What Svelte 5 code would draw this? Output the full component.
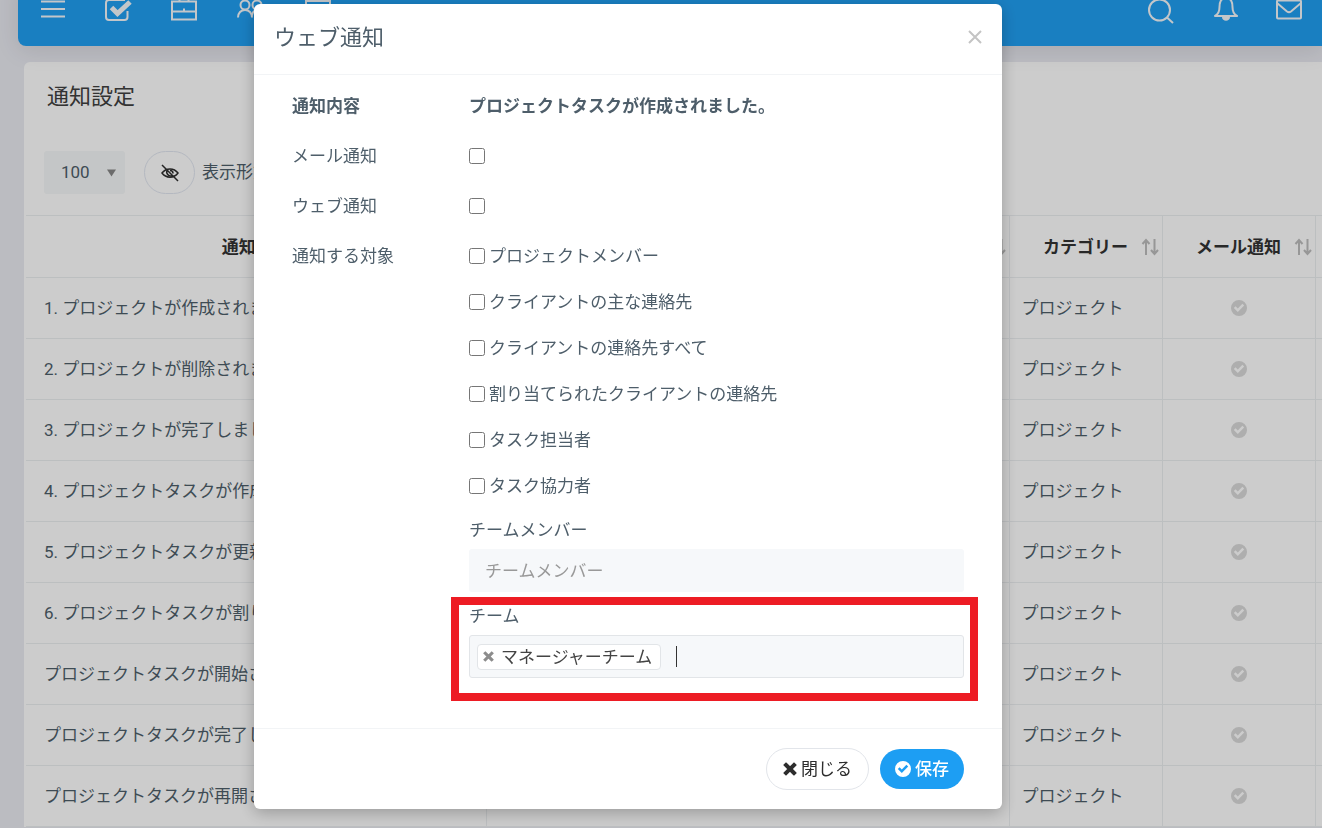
<script lang="ts">
  const rows = [
    '1. プロジェクトが作成されました。',
    '2. プロジェクトが削除されました。',
    '3. プロジェクトが完了しました。',
    '4. プロジェクトタスクが作成されました。',
    '5. プロジェクトタスクが更新されました。',
    '6. プロジェクトタスクが割り当てられました。',
    'プロジェクトタスクが開始されました。',
    'プロジェクトタスクが完了しました。',
    'プロジェクトタスクが再開されました。',
  ]

  const columns = ['通知内容', '通知する対象', 'カテゴリー', 'メール通知']

  let targets = $state([
    { id: 'project-members', label: 'プロジェクトメンバー', checked: false },
    { id: 'primary-contact', label: 'クライアントの主な連絡先', checked: false },
    { id: 'all-contacts', label: 'クライアントの連絡先すべて', checked: false },
    { id: 'assigned-contacts', label: '割り当てられたクライアントの連絡先', checked: false },
    { id: 'assignee', label: 'タスク担当者', checked: false },
    { id: 'collaborators', label: 'タスク協力者', checked: false },
  ])

  let teams = $state(['マネージャーチーム'])
  let mail = $state(false)
  let web = $state(false)

  function removeTeam(name: string) {
    teams = teams.filter((t) => t !== name)
  }
</script>

{#snippet cross()}
  <svg class="cross" viewBox="0 0 14 14" aria-hidden="true">
    <path d="M3 3l8 8M11 3l-8 8" stroke="currentColor" stroke-width="4" stroke-linecap="square" />
  </svg>
{/snippet}

{#snippet checkCircle()}
  <svg class="check-circle" viewBox="0 0 16 16" aria-hidden="true">
    <path
      fill="currentColor"
      fill-rule="evenodd"
      d="M8 0a8 8 0 1 0 0 16A8 8 0 0 0 8 0zM6.8 12L2.8 8l1.8-1.8 2.2 2.2 4.6-4.6 1.8 1.8z"
    />
  </svg>
{/snippet}

<header class="topbar">
  <nav>
    <a href="#menu" aria-label="メニュー">
      <svg viewBox="0 0 28 28"><path d="M2 7.5h24M2 15h24M2 22.5h24" /></svg>
    </a>
    <a href="#tasks" aria-label="タスク">
      <svg viewBox="0 0 28 28">
        <path d="M20 6H4a3 3 0 0 0-3 3v14a3 3 0 0 0 3 3h15.5a3 3 0 0 0 3-3v-6" />
        <path d="M6.500 13.500l6 6L25 8" stroke-width="5" />
      </svg>
    </a>
    <a href="#projects" aria-label="プロジェクト">
      <svg viewBox="0 0 28 28">
        <path d="M1 7.500h24V25.500H1zM1 17.500h24M8.500 7V3h9v4M13 14.500v2" />
      </svg>
    </a>
    <a href="#members" aria-label="メンバー">
      <svg viewBox="0 0 28 28">
        <circle cx="8" cy="11" r="4.500" />
        <path d="M1 23.500c0-4.500 3-7.500 7-7.500s7 3 7 7.500" />
        <circle cx="20" cy="11" r="4.500" />
        <path d="M15 21.500c.5-3.500 2.500-5.500 5.500-5.500 4 0 6.500 3 6.500 7.500" />
      </svg>
    </a>
    <a href="#board" aria-label="ボード">
      <svg viewBox="0 0 28 28"><path d="M3 7h24v18H3zM8 12.500h14" /></svg>
    </a>
  </nav>
  <nav class="right">
    <a href="#search" aria-label="検索">
      <svg viewBox="0 0 28 28"><circle cx="12.500" cy="16" r="10.500" /><path d="M20 23.500l6 5.500" /></svg>
    </a>
    <a href="#alerts" aria-label="お知らせ">
      <svg viewBox="0 0 28 28">
        <path
          d="M4 22c3-1.500 4.500-4 4.500-9C8.500 7 11 4 15 4s6.500 3 6.500 9c0 5 1.500 7.500 4.500 9z"
          stroke-linejoin="round"
        />
        <path d="M11 23h8c0 5-8 5-8 0z" fill="currentColor" stroke="none" />
      </svg>
    </a>
    <a href="#mail" aria-label="メール">
      <svg viewBox="0 0 28 28">
        <rect x="2" y="6.500" width="24" height="18" rx="1" />
        <path d="M2 9l10 8.500c1.500 1 2.500 1 4 0L26 9" />
      </svg>
    </a>
  </nav>
</header>

<main>
  <h1>通知設定</h1>

  <div class="toolbar">
    <div class="select">
      <select aria-label="表示件数">
        <option>100</option>
      </select>
      <svg viewBox="0 0 10 8" aria-hidden="true"><path d="M0 0h10L5 8z" fill="currentColor" /></svg>
    </div>
    <button class="pill" aria-label="列の表示">
      <svg viewBox="0 0 20 20" fill="none" stroke="currentColor" stroke-width="1.5" aria-hidden="true">
        <path d="M2 10c4-5.500 12-5.500 16 0-4 5.500-12 5.500-16 0z" />
        <path d="M7 7.500a4 4 0 0 0 5.500 5M10 7.500a3 3 0 0 1 3 3M2 2l16 16" />
      </svg>
    </button>
    <span>表示形式</span>
  </div>

  <table>
    <colgroup>
      <col class="c-event" />
      <col />
      <col class="c-narrow" />
      <col class="c-narrow" />
      <col class="c-rest" />
    </colgroup>
    <thead>
      <tr>
        {#each columns as column}
          <th>
            <div class="head">
              <span>{column}</span>
              <svg viewBox="0 0 18 18" aria-hidden="true">
                <path d="M5 17V2M1.500 6L5 2l3.500 4M13.500 1v15M10 12l3.500 4 3.500-4" />
              </svg>
            </div>
          </th>
        {/each}
        <td></td>
      </tr>
    </thead>
    <tbody>
      {#each rows as row}
        <tr>
          <td>{row}</td>
          <td></td>
          <td class="category">プロジェクト</td>
          <td class="state">{@render checkCircle()}</td>
          <td></td>
        </tr>
      {/each}
    </tbody>
  </table>
</main>

<div class="backdrop">
  <div class="modal" role="dialog" aria-modal="true" aria-labelledby="modal-title">
    <div class="modal-head">
      <h2 id="modal-title">ウェブ通知</h2>
      <button class="dismiss" aria-label="閉じる">
        <svg viewBox="0 0 14 14" aria-hidden="true"><path d="M1 1l12 12M13 1L1 13" /></svg>
      </button>
    </div>

    <div class="modal-body">
      <strong>通知内容</strong>
      <strong>プロジェクトタスクが作成されました。</strong>

      <label for="mail">メール通知</label>
      <div class="cell"><input id="mail" type="checkbox" bind:checked={mail} /></div>

      <label for="web">ウェブ通知</label>
      <div class="cell"><input id="web" type="checkbox" bind:checked={web} /></div>

      <span>通知する対象</span>
      <div class="targets">
        {#each targets as target (target.id)}
          <div class="target">
            <input id={target.id} type="checkbox" bind:checked={target.checked} />
            <label for={target.id}>{target.label}</label>
          </div>
        {/each}

        <div class="field">
          <label for="members">チームメンバー</label>
          <input id="members" type="text" placeholder="チームメンバー" />
        </div>

        <div class="field marked">
          <label for="team">チーム</label>
          <div class="tags">
            {#each teams as team}
              <span class="tag">
                <button aria-label="{team}を削除" onclick={() => removeTeam(team)}>
                  {@render cross()}
                </button>
                {team}
              </span>
            {/each}
            <span class="caret"></span>
            <input id="team" type="text" />
          </div>
        </div>
      </div>
    </div>

    <div class="modal-foot">
      <button class="close">{@render cross()}閉じる</button>
      <button class="save">{@render checkCircle()}保存</button>
    </div>
  </div>
</div>

<style>
  :global(body) {
    background: #eaebf2;
    color: #4e5e6a;
    font: 17px/24px Roboto, 'Noto Sans CJK JP', sans-serif;
    overflow: hidden;
  }

  button,
  input,
  select {
    font: inherit;
    color: inherit;
  }

  button {
    cursor: pointer;
  }

  .topbar {
    position: relative;
    display: flex;
    justify-content: space-between;
    box-sizing: border-box;
    height: 66px;
    margin: -20px 0 16px 18px;
    padding: 14px 19px 0 21px;
    border-radius: 0 0 0 8px;
    background: #209ff2;
    box-shadow: 0 4px 24px #0000001a;
  }

  nav {
    display: flex;
    gap: 38px;
  }
  nav.right {
    gap: 36px;
  }
  nav a {
    color: #f4f8fc;
  }
  nav svg {
    display: block;
    width: 28px;
    height: 28px;
    overflow: visible;
    fill: none;
    stroke: currentColor;
    stroke-width: 2;
  }

  main {
    margin-left: 24px;
    padding-left: 2px;
    border-radius: 6px 0 0 0;
    background: #fff;
  }

  h1,
  h2 {
    margin: 0;
    font-size: 22px;
    font-weight: 400;
    line-height: 32px;
  }

  h1 {
    padding: 19px 21px 0;
    color: #404040;
  }

  .toolbar {
    display: flex;
    align-items: center;
    padding: 38px 18px 21px;
  }

  .select {
    position: relative;
    margin-right: 19px;
  }
  .select select {
    width: 81px;
    height: 43px;
    padding: 0 17px 2px;
    border: 0;
    border-radius: 3px;
    background: #f6f8f9;
    appearance: none;
  }
  .select svg {
    position: absolute;
    top: 18px;
    right: 9px;
    width: 9px;
    height: 8px;
    color: #888;
    pointer-events: none;
  }

  .pill {
    width: 51px;
    height: 43px;
    margin-right: 7px;
    padding: 0;
    border: 1px solid #e2e7f1;
    border-radius: 22px;
    background: none;
    color: #2d2d2d;
  }
  .pill svg {
    display: block;
    width: 20px;
    height: 20px;
    margin: 0 auto;
  }
  .toolbar span {
    padding-bottom: 2px;
  }

  table {
    width: 100%;
    border-collapse: collapse;
    table-layout: fixed;
  }
  .c-event {
    width: 460px;
  }
  .c-narrow {
    width: 153px;
  }
  .c-rest {
    width: 7px;
  }

  th,
  td {
    box-sizing: border-box;
    height: 61px;
    padding: 0 0 0 18px;
    border: solid #eceff1;
    border-width: 1px 1px 1px 0;
    white-space: nowrap;
  }
  thead th {
    height: 62px;
    padding: 0 3px;
    color: #333;
  }
  th:last-child,
  td:last-child {
    padding: 0;
    border-right: 0;
  }
  td.category {
    padding-left: 12px;
  }
  td.state {
    padding: 0;
    color: #dadada;
  }
  .state .check-circle {
    margin: 0 auto;
  }

  .head {
    display: grid;
    grid-template-columns: 1fr auto 1fr;
    align-items: center;
  }
  .head span {
    grid-column: 2;
  }
  .head svg {
    justify-self: end;
    width: 18px;
    height: 18px;
    fill: none;
    stroke: #bdbdbd;
    stroke-width: 2;
  }

  .check-circle {
    display: block;
    width: 16px;
    height: 16px;
  }

  .backdrop {
    position: fixed;
    inset: 0;
    display: flex;
    align-items: flex-start;
    justify-content: center;
    padding: 4px 66px 4px 0;
    background: #00000033;
  }

  .modal {
    width: 100%;
    max-width: 748px;
    border-radius: 6px;
    background: #fff;
    box-shadow: 0 4px 16px #00000040;
  }

  .modal-head {
    display: flex;
    align-items: center;
    justify-content: space-between;
    padding: 18px 20px 20px;
    border-bottom: 1px solid #f2f4f6;
  }

  .dismiss {
    display: flex;
    padding: 0 0 2px;
    border: 0;
    background: none;
  }
  .dismiss svg {
    width: 14px;
    height: 14px;
    fill: none;
    stroke: #c4c4c4;
    stroke-width: 2;
  }

  .modal-body {
    display: grid;
    grid-template-columns: 177px 1fr;
    padding: 6px 38px 50px;
    line-height: 50px;
  }

  .cell {
    display: flex;
    align-items: center;
    height: 50px;
  }

  input[type='checkbox'] {
    width: 16px;
    height: 16px;
    margin: 0;
  }

  .targets {
    padding-top: 2px;
    line-height: 38px;
  }
  .target {
    display: flex;
    align-items: center;
    gap: 4px;
    height: 46px;
  }

  .field {
    position: relative;
    margin-top: 2px;
  }
  .field + .field {
    margin-top: 5px;
  }
  .field > label {
    display: block;
  }
  .field > input {
    display: block;
    box-sizing: border-box;
    width: 100%;
    height: 43px;
    padding: 0 16px;
    border: 0;
    border-radius: 3px;
    background: #f6f8fa;
  }
  .field > input::placeholder {
    color: #999;
  }

  .marked::after {
    content: '';
    position: absolute;
    inset: 0 -14px -23px -18px;
    border: 8px solid #ed1c24;
    pointer-events: none;
  }

  .tags {
    display: flex;
    align-items: center;
    box-sizing: border-box;
    height: 43px;
    padding: 0 7px;
    border: 1px solid #e2e5e8;
    border-radius: 3px;
    background: #f6f8fa;
  }
  .tags input {
    flex: 1;
    min-width: 0;
    padding: 0;
    border: 0;
    background: none;
    outline: 0;
  }

  .tag {
    display: flex;
    align-items: center;
    gap: 7px;
    padding: 0 8px 0 5px;
    border: 1px solid #e2e5e8;
    border-radius: 4px;
    background: #fff;
    color: #444;
    line-height: 24px;
  }
  .tag button {
    display: flex;
    padding: 0;
    border: 0;
    background: none;
    color: #8c8c8c;
  }
  .tag .cross {
    width: 11px;
    height: 11px;
  }

  .caret {
    width: 1px;
    height: 21px;
    margin-left: 15px;
    background: #333;
  }

  .cross {
    width: 14px;
    height: 14px;
  }

  .modal-foot {
    display: flex;
    align-items: center;
    justify-content: flex-end;
    gap: 11px;
    padding: 19px 38px;
    border-top: 1px solid #f2f4f6;
  }
  .modal-foot button {
    display: flex;
    align-items: center;
    justify-content: center;
    gap: 4px;
    height: 40px;
    padding: 0 15px;
    border: 0;
    border-radius: 21px;
  }
  .modal-foot .close {
    height: 42px;
    padding: 0 16px;
    border: 1px solid #e2e5ea;
    background: #fff;
    color: #2d2d2d;
  }
  .modal-foot .save {
    background: #1d9ef3;
    color: #fff;
    font-weight: 500;
  }
</style>
